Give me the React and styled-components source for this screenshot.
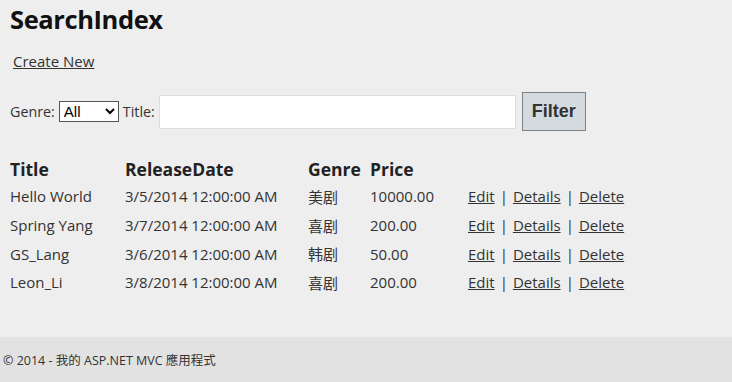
import React from "react";
import styled, { createGlobalStyle } from "styled-components";

const Global = createGlobalStyle`
  html, body { margin: 0; padding: 0; background: #eeeeee; }
  body { font-family: "Open Sans", "Noto Sans CJK SC", sans-serif; color: #333; }
`;

const Page = styled.div`
  display: flex;
  flex-direction: column;
  min-height: 382px;
`;

const Main = styled.div`
  padding: 0 10px;
  flex: 1;
`;

const Heading = styled.h2`
  margin: 3px 0 0;
  font-size: 25.5px;
  font-weight: 700;
  color: #111;
  line-height: 32px;
  letter-spacing: -0.4px;
`;

const Link = styled.a`
  color: #333;
  text-decoration: underline;
  font-size: 15px;
  cursor: pointer;
`;

const CreateRow = styled.p`
  margin: 16px 0 0 3px;
  line-height: 20px;
`;

const FormRow = styled.form`
  display: flex;
  align-items: center;
  margin-top: 21px;
  font-size: 14px;
`;

const Label = styled.span`
  font-size: 14.3px;
  color: #333;
  margin-right: 4px;
`;

const Select = styled.select`
  width: 60px;
  height: 21px;
  font-family: "Liberation Sans", Arial, sans-serif;
  font-size: 15px;
  border: 1px solid #555;
  background: #fff;
  color: #000;
  padding: 0;
  margin-right: 4px;
  border-radius: 0;
`;

const Input = styled.input`
  width: 357px;
  height: 34px;
  box-sizing: border-box;
  border: 1px solid #ddd;
  background: #fff;
  margin-right: 6px;
`;

const Button = styled.button`
  width: 64px;
  height: 39px;
  background: #d3dbe1;
  border: 1px solid #808080;
  font-family: "Liberation Sans", Arial, sans-serif;
  font-weight: 700;
  font-size: 18px;
  color: #333;
  padding: 0;
`;

const Table = styled.table`
  border-collapse: collapse;
  margin-top: 26px;
  margin-left: -1px;
`;

const Th = styled.th`
  text-align: left;
  font-size: 17.5px;
  font-weight: 700;
  color: #222;
  padding: 0 0 0 1px;
  height: 25px;
  line-height: 25px;
  width: ${(p) => p.$w}px;
`;

const Td = styled.td`
  font-size: 15px;
  color: #333;
  padding: 0 0 0 1px;
  height: 28.7px;
`;

const Sep = styled.span`
  color: #333;
  margin: 0 5px;
`;

const Footer = styled.footer`
  background: #e2e2e2;
  height: 45px;
  display: flex;
  align-items: center;
  padding-left: 3px;
  font-size: 12.5px;
  color: #333;
`;

const rows = [
  ["Hello World", "3/5/2014 12:00:00 AM", "美剧", "10000.00"],
  ["Spring Yang", "3/7/2014 12:00:00 AM", "喜剧", "200.00"],
  ["GS_Lang", "3/6/2014 12:00:00 AM", "韩剧", "50.00"],
  ["Leon_Li", "3/8/2014 12:00:00 AM", "喜剧", "200.00"],
];

export default function App() {
  return (
    <Page>
      <Global />
      <Main>
        <Heading>SearchIndex</Heading>
        <CreateRow>
          <Link>Create New</Link>
        </CreateRow>
        <FormRow onSubmit={(e) => e.preventDefault()}>
          <Label>Genre:</Label>
          <Select defaultValue="All">
            <option>All</option>
            <option>美剧</option>
            <option>喜剧</option>
            <option>韩剧</option>
          </Select>
          <Label>Title:</Label>
          <Input type="text" />
          <Button type="submit">Filter</Button>
        </FormRow>
        <Table>
          <thead>
            <tr>
              <Th $w={114}>Title</Th>
              <Th $w={182}>ReleaseDate</Th>
              <Th $w={61}>Genre</Th>
              <Th $w={97}>Price</Th>
              <Th $w={170}></Th>
            </tr>
          </thead>
          <tbody>
            {rows.map((r) => (
              <tr key={r[0]}>
                <Td>{r[0]}</Td>
                <Td>{r[1]}</Td>
                <Td>{r[2]}</Td>
                <Td>{r[3]}</Td>
                <Td>
                  <Link>Edit</Link>
                  <Sep>|</Sep>
                  <Link>Details</Link>
                  <Sep>|</Sep>
                  <Link>Delete</Link>
                </Td>
              </tr>
            ))}
          </tbody>
        </Table>
      </Main>
      <Footer>© 2014 - 我的 ASP.NET MVC 應用程式</Footer>
    </Page>
  );
}
